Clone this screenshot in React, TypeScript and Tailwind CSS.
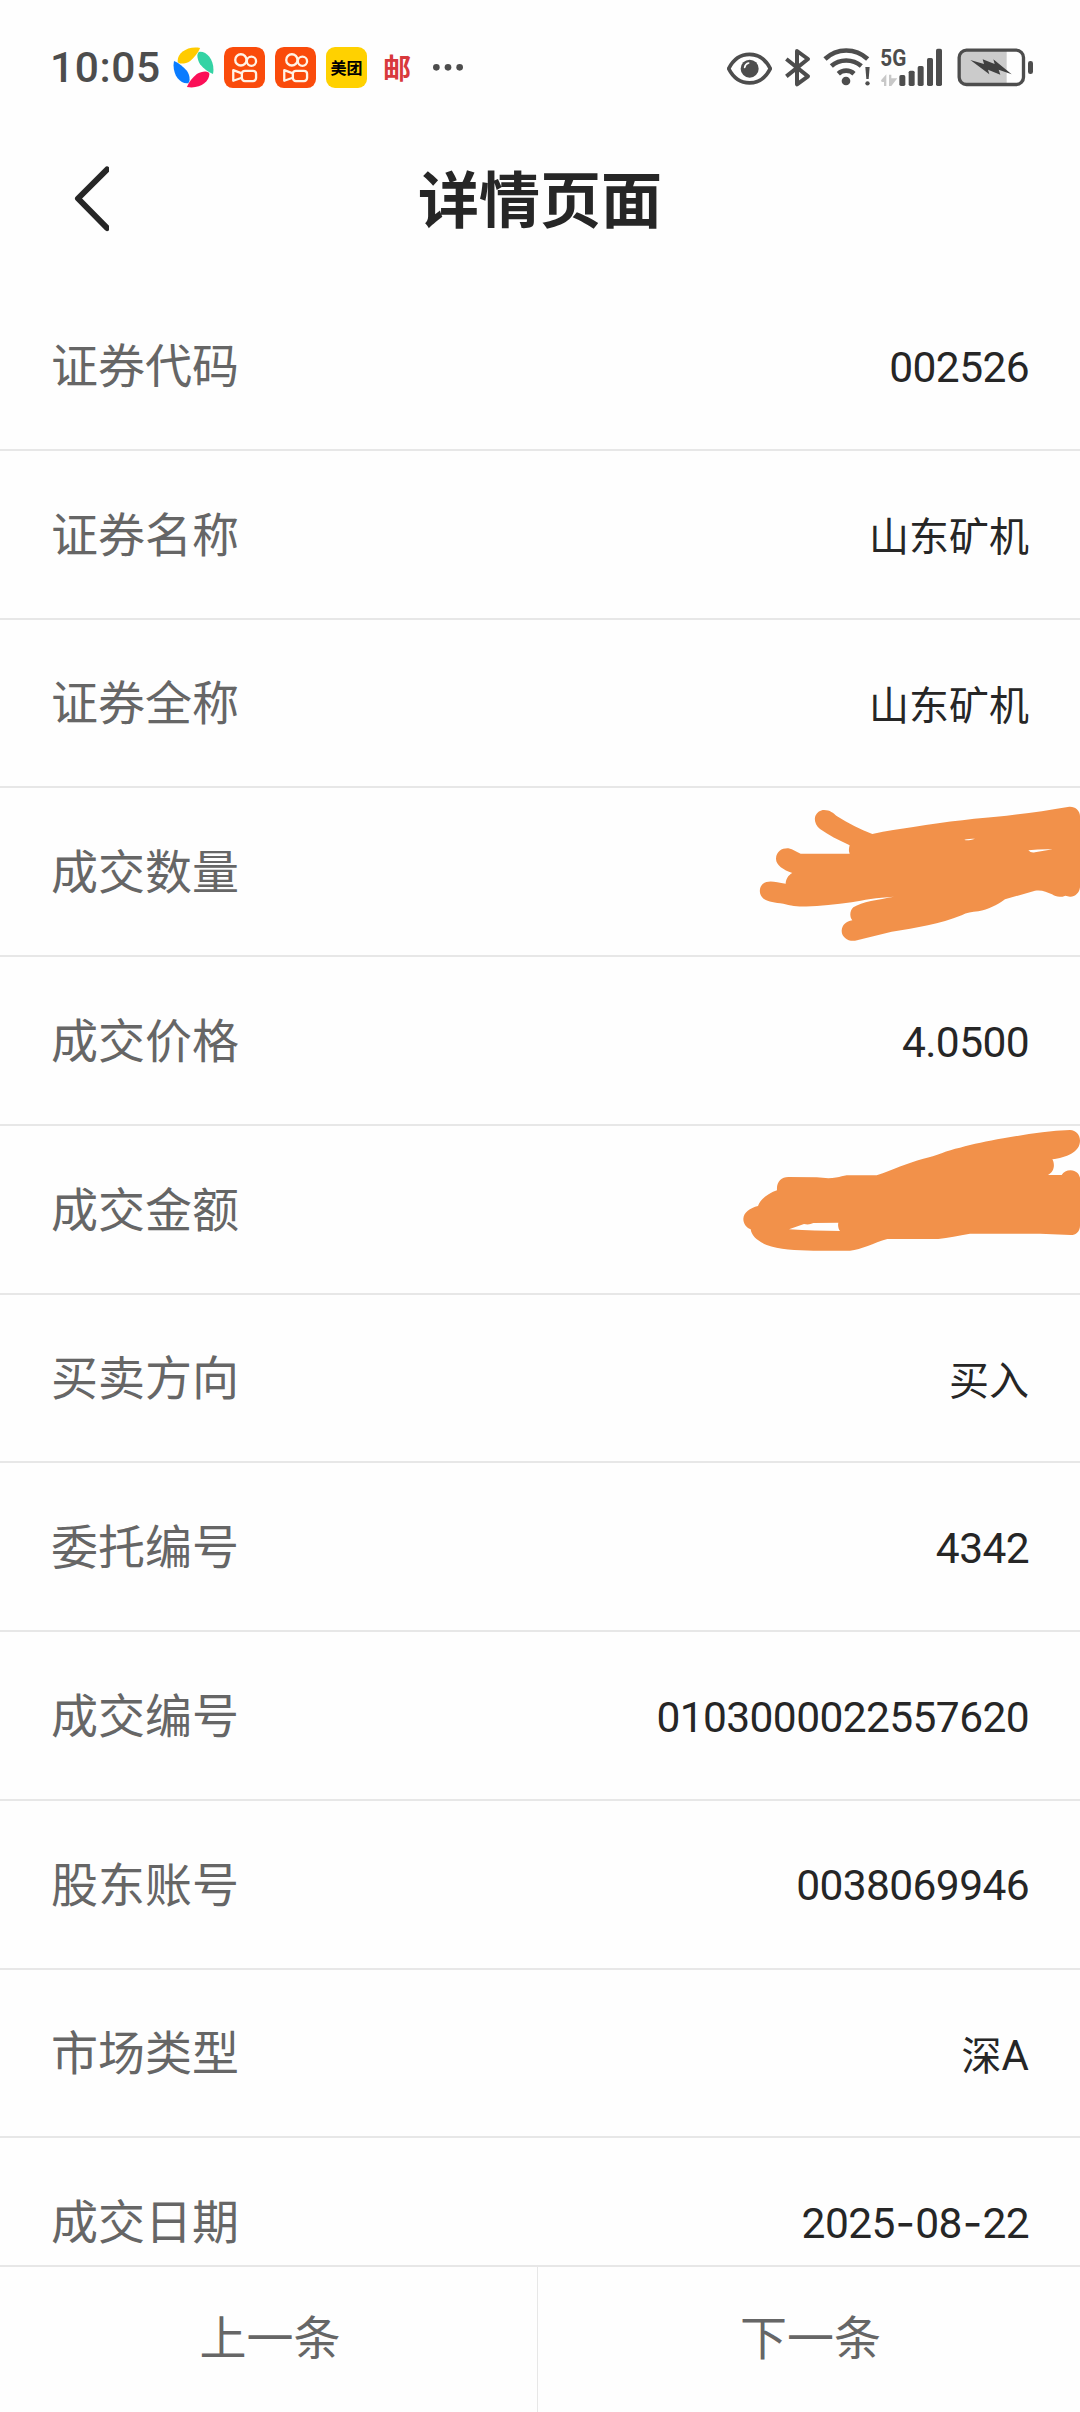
import type { ReactNode } from 'react'

type Row = {
  label: string
  value?: string
  mask?: ReactNode
}

function QuantityMask() {
  return (
    <svg viewBox="0 24 1080 504" className="w-[360px] h-[168px] shrink-0" fill="#f2914a">
      <path
        fillRule="evenodd"
        d="M312 90C330 90 340 99 350 108C385 130 420 148 457 162C500 152 540 148 580 141C680 124 780 114 860 107C920 100 980 92 1048 80C1066 79 1080 92 1080 108V322C1078 340 1064 351 1050 350L1036 347C1022 353 1006 351 996 343C980 335 965 329 945 332L855 358C830 376 805 389 775 394C755 396 740 398 725 406C660 432 590 444 515 455L405 482C385 485 365 472 365 452C366 435 378 424 397 421C388 410 389 392 400 382C425 365 475 359 522 350C470 353 430 360 395 367C320 377 240 387 190 371C165 368 145 366 132 357C115 345 117 322 128 312C145 299 165 306 197 311C197 298 205 285 217 279C190 269 168 256 168 236C169 213 187 204 205 205C220 208 229 217 242 221H389C385 212 387 204 389 196C355 180 325 165 300 147C286 136 282 120 286 108C291 97 301 90 312 90ZM733 179C740 183 750 180 765 176C753 176 742 177 733 179ZM925 211Q933 220 945 217L998 208Q960 207 925 211Z"
      />
    </svg>
  )
}

function AmountMask() {
  return (
    <svg viewBox="0 48 1080 504" className="w-[360px] h-[168px] shrink-0" fill="#f2914a">
      <path
        fillRule="evenodd"
        d="M1050 63C1068 64 1080 77 1080 95C1080 130 1038 145 997 151C1005 165 1004 188 984 198H1025C1030 189 1040 184 1052 184C1068 185 1077 194 1080 206V350C1080 367 1068 378 1052 378L960 374H750C715 379 685 387 655 390H502C460 402 425 422 390 425H280C230 424 175 422 140 408C112 396 94 380 92 361C77 354 70 343 70 329C71 310 90 297 114 291C121 268 148 252 171 244C169 218 184 204 205 204L290 205C320 209 350 208 365 202L380 199H470C520 182 560 162 610 149C650 140 680 124 720 116C760 105 800 97 850 88C910 78 980 65 1050 63ZM207 361C260 365 310 366 360 366C355 359 353 350 355 341L280 342Q267 349 252 345Z"
      />
    </svg>
  )
}

const rows: Row[] = [
  { label: '证券代码', value: '002526' },
  { label: '证券名称', value: '山东矿机' },
  { label: '证券全称', value: '山东矿机' },
  { label: '成交数量', mask: <QuantityMask /> },
  { label: '成交价格', value: '4.0500' },
  { label: '成交金额', mask: <AmountMask /> },
  { label: '买卖方向', value: '买入' },
  { label: '委托编号', value: '4342' },
  { label: '成交编号', value: '0103000022557620' },
  { label: '股东账号', value: '0038069946' },
  { label: '市场类型', value: '深A' },
  { label: '成交日期', value: '2025-08-22' },
]

function KuaishouIcon() {
  return (
    <svg viewBox="0 0 124 124" className="size-[41px]" fill="none" stroke="#fff3e6">
      <rect width="124" height="124" rx="27" fill="#fa4b0b" stroke="none" />
      <g strokeWidth="7">
        <circle cx="51" cy="39" r="17" />
        <circle cx="83" cy="43" r="14" />
        <rect x="54" y="72" width="43" height="31" rx="9" />
        <path d="M54 80L28 70V102L54 93" strokeLinejoin="round" />
      </g>
    </svg>
  )
}

function StatusBar() {
  return (
    <div className="flex h-[110px] shrink-0 items-start justify-between pt-[30px] pl-[50px] pr-[47px] text-[#4d4d4d]">
      <div className="flex h-[75px] items-center">
        <span className="w-[123px] pt-[2px] font-['Roboto'] text-[42.5px] font-medium leading-none tracking-[0.6px]">10:05</span>
        <svg viewBox="0 0 124 124" className="size-[41px]">
          <path d="M14 42C14 18 44 -4 82 3C76 18 64 32 52 42C38 52 14 54 14 42Z" fill="#ffcb00" />
          <path d="M82 14C106 14 128 44 121 82C106 76 92 64 82 52C72 38 70 14 82 14Z" fill="#34d3a4" />
          <path d="M110 82C110 106 80 128 42 121C48 106 60 92 72 82C86 72 110 70 110 82Z" fill="#fb0f57" />
          <path d="M42 110C18 110 -4 80 3 42C18 48 32 60 42 72C52 86 54 110 42 110Z" fill="#0a7cff" />
        </svg>
        <div className="ml-[10px] flex items-center gap-[10px]">
          <KuaishouIcon />
          <KuaishouIcon />
          <div className="flex size-[41px] items-center justify-center rounded-[9px] bg-[#ffd100] pb-[2px] font-['Noto_Sans_CJK_SC',sans-serif] text-[16px] font-bold leading-none text-black">
            美团
          </div>
        </div>
        <span className="ml-[16px] pb-px font-['Noto_Sans_CJK_SC',sans-serif] text-[28px] font-bold leading-none text-[#d8393c]">邮</span>
        <svg viewBox="0 0 90 20" className="ml-[22px] w-[30px]" fill="currentColor">
          <circle cx="10" cy="10" r="10" />
          <circle cx="45" cy="10" r="10" />
          <circle cx="80" cy="10" r="10" />
        </svg>
      </div>

      <div className="flex">
        {/* Eye comfort */}
        <svg viewBox="78 0 135 240" className="h-20 w-[45px]">
          <path d="M83 116C112 59 179 59 208 116C179 173 112 173 83 116Z" fill="none" stroke="currentColor" strokeWidth="11" strokeLinejoin="round" />
          <circle cx="146" cy="116" r="27" fill="currentColor" />
          <path d="M131 112Q133 101 143 99" fill="none" stroke="#fff" strokeWidth="5" strokeLinecap="round" />
        </svg>
        {/* Bluetooth */}
        <svg viewBox="250 0 81 240" className="ml-[12px] h-20 w-[27px]">
          <path d="M257 87L322 139L289 163V63L322 87L257 139" fill="none" stroke="currentColor" strokeWidth="12" strokeLinejoin="round" />
        </svg>
        {/* Wifi */}
        <svg viewBox="368 0 144 240" className="ml-[12px] h-20 w-[48px]" fill="none" stroke="currentColor" strokeWidth="14">
          <path d="M374 87C410 53 465 53 502 87" />
          <path d="M393 108C418 86 457 86 483 108" />
          <path d="M414 131C427 119 448 119 461 131" />
          <circle cx="437" cy="153" r="13" fill="currentColor" stroke="none" />
          <path d="M495 111H508L505 147H498Z" fill="currentColor" stroke="none" />
          <circle cx="501.500" cy="160" r="6.500" fill="currentColor" stroke="none" />
        </svg>
        {/* Signal */}
        <svg viewBox="540 0 189 240" className="ml-[9px] h-20 w-[63px]" fill="currentColor">
          <text x="541" y="109" textLength="78" lengthAdjust="spacingAndGlyphs" className="font-['Roboto'] text-[71px] font-bold">
            5G
          </text>
          <path d="M543 151L559 133V168H552V156H545ZM567 134H574V145H592L574 168H567Z" fill="#c8c8c8" />
          <rect x="598" y="135" width="18" height="33" rx="5" />
          <rect x="626" y="122" width="18" height="46" rx="5" />
          <rect x="653" y="108" width="18" height="60" rx="5" />
          <rect x="681" y="84" width="18" height="84" rx="5" />
          <rect x="708" y="56" width="18" height="112" rx="5" />
        </svg>
        {/* Battery */}
        <svg viewBox="771 0 228 240" className="ml-[14px] h-20 w-[76px]">
          <path d="M800 61H920V163H800Q778 163 778 141V83Q778 61 800 61Z" fill="#cbcbcb" />
          <rect x="777.500" y="60.500" width="193" height="103" rx="22" fill="none" stroke="currentColor" strokeWidth="10" />
          <rect x="984" y="93" width="15" height="39" rx="7" fill="currentColor" />
          <path d="M811 90L852 102L848 88L884 102L880 88L935 133L896 119L901 134L864 119L868 133Z" fill="#404040" />
        </svg>
      </div>
    </div>
  )
}

function Value({ text }: { text: string }) {
  // Digits sit on the DIN-like widths, Chinese values keep their own size
  if (/^[\d.-]+$/.test(text)) {
    return (
      <span className="mt-[5px] mr-[51px] font-['Roboto'] text-[42.5px] leading-none tracking-[-0.6px] text-[#262626]">
        {text.split(/(-)/).map((part, i) =>
          part === '-' ? (
            <span key={i} className="px-[0.8px] font-['Inter']">
              -
            </span>
          ) : (
            part
          )
        )}
      </span>
    )
  }
  return (
    <span className="mt-[4px] mr-[51px] text-[40px] leading-none text-[#262626]">
      {text.replace(/[A-Z]/g, '')}
      <span className="font-['Roboto'] text-[42px]">{text.replace(/[^A-Z]/g, '')}</span>
    </span>
  )
}

export default function App() {
  return (
    <div className="flex h-[2412px] w-[1080px] flex-col overflow-hidden bg-[#fefefe] font-['Noto_Sans_CJK_SC',sans-serif]">
      <StatusBar />

      <header className="grid h-[172px] shrink-0 grid-cols-3 items-start pt-[56px]">
        <svg viewBox="0 0 36 66" className="ml-[73px] w-[36px]" fill="none" stroke="#262626" strokeWidth="6" strokeLinecap="round" strokeLinejoin="round">
          <path d="M34 3.500L5 32.500L34 62" />
        </svg>
        <h1 className="text-center text-[61px] font-bold leading-none whitespace-nowrap text-[#262626]">详情页面</h1>
      </header>

      <main className="flex min-h-0 flex-1 flex-col overflow-hidden">
        {rows.map((row) => (
          <div key={row.label} className="flex h-[168.75px] shrink-0 items-center justify-between border-b-2 border-[#e7e7e7] pl-[51px]">
            <span className="pb-[6px] text-[47px] leading-none text-[#666]">{row.label}</span>
            {row.mask ?? <Value text={row.value ?? ''} />}
          </div>
        ))}
      </main>

      <nav className="flex h-[147px] shrink-0 border-t-2 border-[#e7e7e7] bg-[#fefefe] text-[47px] leading-none text-[#666]">
        <button className="w-[538px] border-r border-[#e7e7e7] pb-[10px] pl-[3px]">上一条</button>
        <button className="flex-1 pb-[10px] pl-[3px]">下一条</button>
      </nav>
    </div>
  )
}
